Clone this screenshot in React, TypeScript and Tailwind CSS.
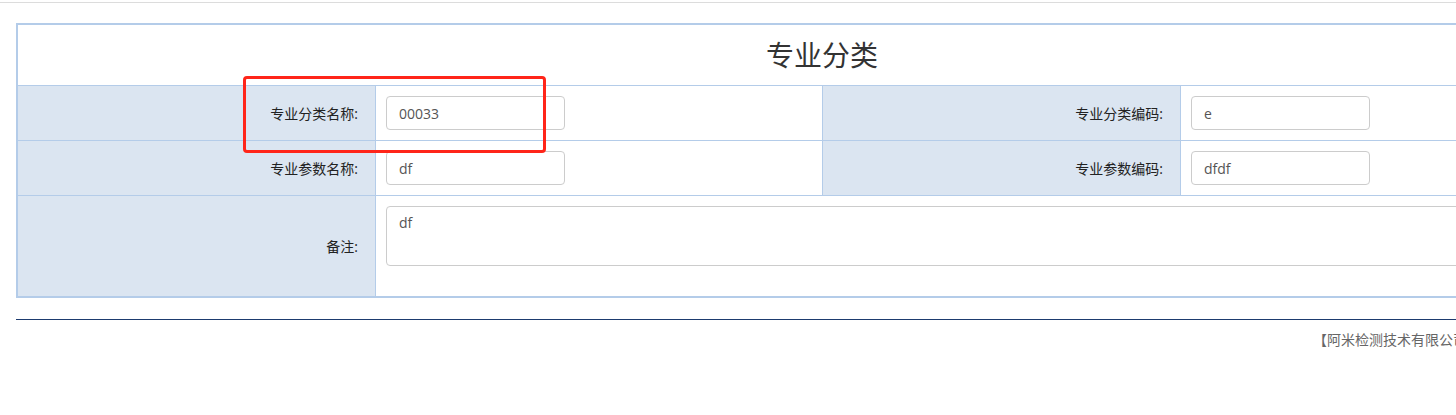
const font = { fontFamily: '"Open Sans", "Noto Sans CJK SC", sans-serif' };

function Field({ value }: { value: string }) {
  return (
    <input
      readOnly
      value={value}
      className="h-[34px] w-[179px] rounded-[4px] border border-[#cccccc] bg-white px-[12px] text-[14px] text-[#555555] outline-none"
    />
  );
}

function Label({ text }: { text: string }) {
  return (
    <div className="flex border-r border-[#b4cce9]">
      <div className="flex flex-1 items-center justify-end bg-[#dbe5f1] pr-[17px] text-[14px] text-[#222222]">
        {text}
      </div>
    </div>
  );
}

export default function App() {
  return (
    <div className="relative h-[415px] w-[1456px] overflow-hidden bg-white" style={font}>
      <div className="mt-[2px] border-t border-[#dcdcdc]" />

      <div className="pl-[16px] pt-[20px]">
        <div className="w-[1612px] border-2 border-[#b4cce9]">
          <div className="flex h-[61px] items-center justify-center border-b border-[#b4cce9] text-[28px] text-[#333333]">
            专业分类
          </div>

          <div className="grid h-[55px] grid-cols-[358px_447px_358px_1fr] border-b border-[#b4cce9]">
            <Label text="专业分类名称:" />
            <div className="flex items-center border-r border-[#b4cce9] pl-[10px]">
              <Field value="00033" />
            </div>
            <Label text="专业分类编码:" />
            <div className="flex items-center pl-[10px]">
              <Field value="e" />
            </div>
          </div>

          <div className="grid h-[55px] grid-cols-[358px_447px_358px_1fr] border-b border-[#b4cce9]">
            <Label text="专业参数名称:" />
            <div className="flex items-center border-r border-[#b4cce9] pl-[10px]">
              <Field value="df" />
            </div>
            <Label text="专业参数编码:" />
            <div className="flex items-center pl-[10px]">
              <Field value="dfdf" />
            </div>
          </div>

          <div className="grid h-[100px] grid-cols-[358px_1fr]">
            <Label text="备注:" />
            <div className="px-[10px] pt-[10px]">
              <textarea
                readOnly
                value="df"
                className="block h-[60px] w-full resize-none rounded-[4px] border border-[#cccccc] bg-white px-[12px] py-[6px] text-[14px] leading-[20px] text-[#555555] outline-none"
              />
            </div>
          </div>
        </div>

        <div className="mt-[21px] w-[1640px] border-t border-[#1d3b6f]" />
        <div className="pl-[1297px] pt-[10px] text-[14px] leading-[20px] whitespace-nowrap text-[#666666]">
          【阿米检测技术有限公司】
        </div>
      </div>

      <div className="absolute left-[243px] top-[76px] h-[77px] w-[303px] rounded-[4px] border-[3px] border-[#ff2519]" />
    </div>
  );
}
